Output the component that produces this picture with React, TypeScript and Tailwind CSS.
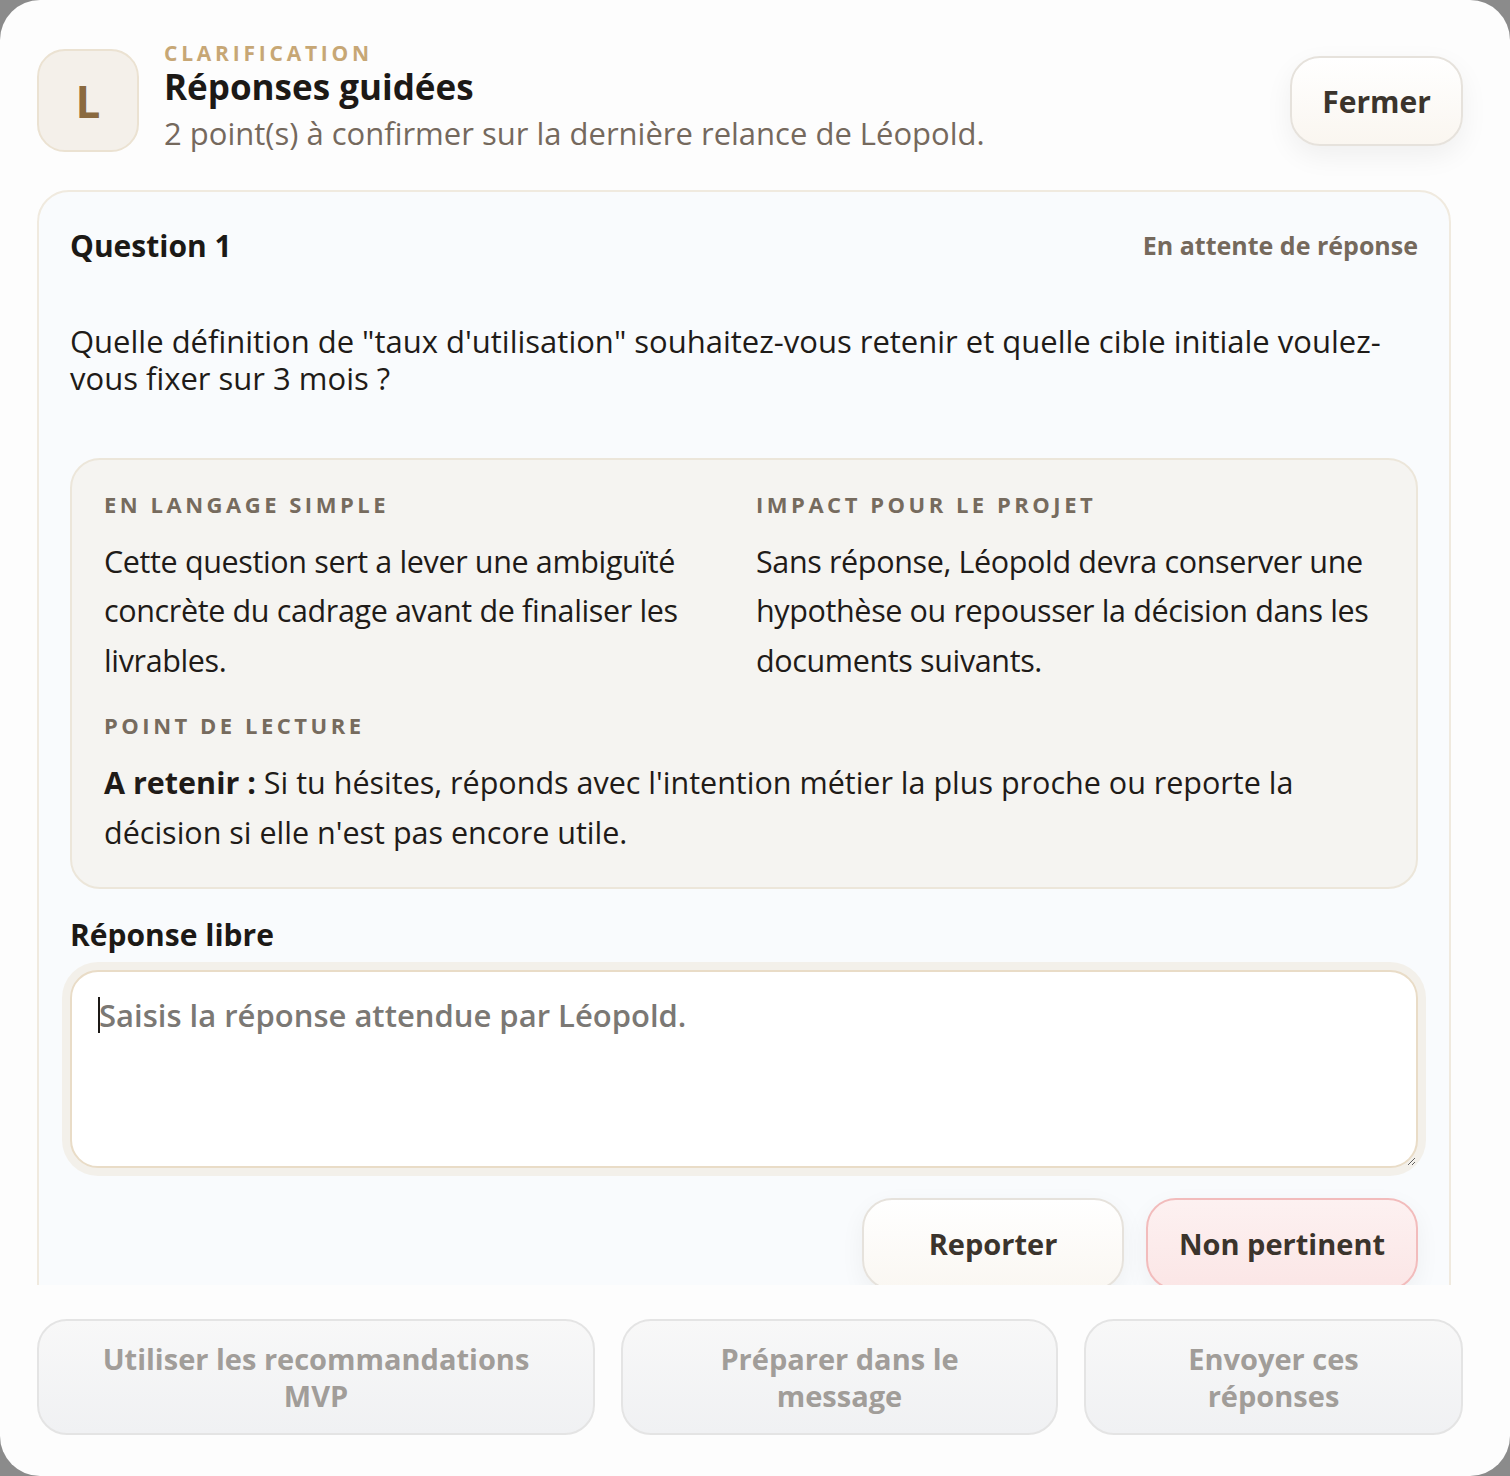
import { useState } from "react"

type Action = { label: string }

const FOOTER_ACTIONS: Action[] = [
  { label: "Utiliser les recommandations MVP" },
  { label: "Préparer dans le message" },
  { label: "Envoyer ces réponses" },
]

function InfoBlock({ title, tight, children }: { title: string; tight?: boolean; children: React.ReactNode }) {
  return (
    <div>
      <p className="text-[22px] leading-[28px] font-bold tracking-[0.16em] uppercase text-[#766b5e]">{title}</p>
      <p className={`mt-[19px] text-[30.5px] leading-[49.5px] text-[#1f1b18] ${tight ? "tracking-[-0.012em]" : ""}`}>
        {children}
      </p>
    </div>
  )
}

export default function App() {
  const [answer, setAnswer] = useState("")

  return (
    <div className="min-h-screen bg-[#8b8b8b] font-['Open_Sans','Lato',sans-serif]">
      <div className="w-[1510px] h-[1476px] rounded-[40px] bg-[#fdfdfd] flex flex-col overflow-hidden">
        {/* header */}
        <div className="flex items-start pl-[37px] pr-[47px] pt-[40px]">
          <div className="mt-[9px] w-[102px] h-[103px] shrink-0 rounded-[28px] bg-[#f4f0ea] border-2 border-[#ebe2d2] flex items-center justify-center">
            <span className="text-[44px] font-bold text-[#8a6a40] leading-none">L</span>
          </div>
          <div className="ml-[25px] min-w-0">
            <p className="text-[21px] leading-[26px] font-bold tracking-[0.18em] text-[#c7a775]">CLARIFICATION</p>
            <h1 className="text-[35px] leading-[42px] font-bold text-[#1c1916]">Réponses guidées</h1>
            <p className="mt-[6px] text-[31px] leading-[38px] text-[#75695d]">
              2 point(s) à confirmer sur la dernière relance de Léopold.
            </p>
          </div>
          <button className="ml-auto mt-[16px] w-[173px] h-[90px] shrink-0 rounded-[30px] border-2 border-[#e6e2dc] bg-gradient-to-b from-white to-[#faf6f0] shadow-[0_10px_28px_rgba(0,0,0,0.06)] text-[30px] font-bold text-[#3b342c]">
            Fermer
          </button>
        </div>

        {/* scrollable body */}
        <div className="flex-1 min-h-0 overflow-hidden pl-[37px] pr-[59px] pt-[38px]">
          <div className="rounded-[32px] border-2 border-[#f0eadf] bg-[#f9fbfd] px-[31px] pt-[35px] pb-[40px]">
            <div className="flex items-center justify-between">
              <h2 className="text-[30px] leading-[36px] font-bold text-[#1c1916]">Question 1</h2>
              <span className="text-[25px] font-bold text-[#75695c]">En attente de réponse</span>
            </div>

            <p className="mt-[58px] text-[31px] leading-[37px] text-[#1f1b18]">
              Quelle définition de "taux d'utilisation" souhaitez-vous retenir et quelle cible initiale voulez-vous fixer sur 3 mois ?
            </p>

            <div className="mt-[61px] rounded-[30px] border-2 border-[#ece6da] bg-[#f5f4f1] px-[32px] pt-[30px] pb-[30px]">
              <div className="grid grid-cols-2 gap-x-[24px]">
                <InfoBlock title="En langage simple" tight>
                  Cette question sert a lever une ambiguïté concrète du cadrage avant de finaliser les livrables.
                </InfoBlock>
                <InfoBlock title="Impact pour le projet" tight>
                  Sans réponse, Léopold devra conserver une hypothèse ou repousser la décision dans les documents suivants.
                </InfoBlock>
              </div>
              <div className="mt-[26px]">
                <InfoBlock title="Point de lecture">
                  <strong className="font-bold">A retenir :</strong> Si tu hésites, réponds avec l'intention métier la plus proche ou reporte la décision si elle n'est pas encore utile.
                </InfoBlock>
              </div>
            </div>

            <label className="block mt-[28px] text-[30px] leading-[36px] font-bold text-[#1c1916]">Réponse libre</label>
            <div className="relative mt-[17px]">
              <textarea
                autoFocus
                value={answer}
                onChange={(e) => setAnswer(e.target.value)}
                placeholder="Saisis la réponse attendue par Léopold."
                className="block w-full h-[198px] rounded-[28px] border-2 border-[#e9dcc7] bg-white shadow-[0_0_0_8px_#f3f0ea] outline-none pl-[27px] pr-[24px] pt-[24px] text-[31px] leading-[39px] font-semibold text-[#2a2520] caret-[#1c1916] placeholder:text-[#7b7874]"
              />
              {/* text cursor while the field is empty */}
              {answer === "" && (
                <span className="pointer-events-none absolute left-[28px] top-[27px] w-[2px] h-[36px] bg-[#1c1916]" />
              )}
            </div>

            <div className="mt-[30px] flex justify-end gap-[22px]">
              <button className="w-[262px] h-[92px] rounded-[30px] border-2 border-[#e6e2dc] bg-gradient-to-b from-white to-[#faf7f2] shadow-[0_8px_24px_rgba(0,0,0,0.05)] text-[29px] font-bold text-[#3b342c]">
                Reporter
              </button>
              <button className="w-[272px] h-[92px] rounded-[30px] border-2 border-[#f2bcbc] bg-gradient-to-b from-[#fdf1f1] to-[#fbe6e6] shadow-[0_8px_24px_rgba(0,0,0,0.05)] text-[29px] font-bold text-[#3b342c]">
                Non pertinent
              </button>
            </div>
          </div>
        </div>

        {/* footer actions */}
        <div className="h-[191px] shrink-0 pl-[37px] pr-[47px] pt-[34px]">
          <div className="grid grid-cols-[558px_437px_379px] gap-[26px]">
            {FOOTER_ACTIONS.map((a) => (
              <button
                key={a.label}
                disabled
                className="h-[116px] rounded-[30px] border-2 border-[#e4e4e4] bg-gradient-to-b from-[#f8f8f8] to-[#f0f1f3] px-[60px] text-[29px] leading-[37px] font-bold text-[#a19d99]"
              >
                {a.label}
              </button>
            ))}
          </div>
        </div>
      </div>
    </div>
  )
}
